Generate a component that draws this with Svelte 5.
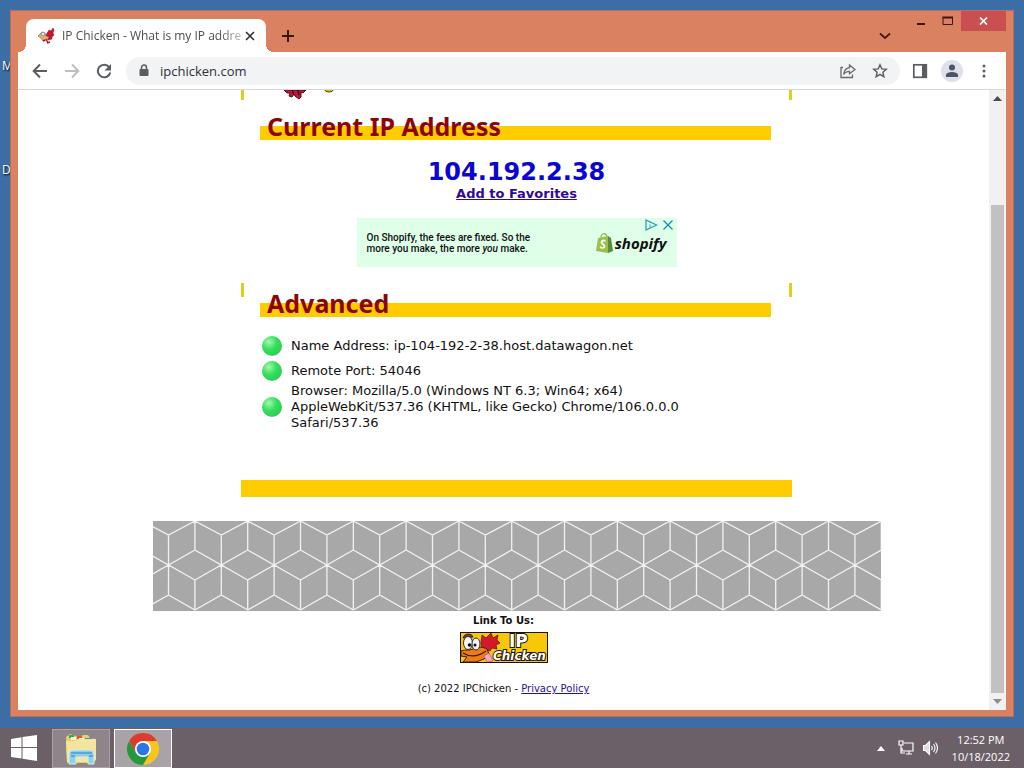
<script>
  const details = [
    'Name Address: ip-104-192-2-38.host.datawagon.net',
    'Remote Port: 54046',
    'Browser: Mozilla/5.0 (Windows NT 6.3; Win64; x64) AppleWebKit/537.36 (KHTML, like Gecko) Chrome/106.0.0.0 Safari/537.36'
  ];

  const step = 26.4;
  let lattice = '';
  for (let i = 0; i < 15; i++) {
    const a = 15.5 + i * step * 2;
    const l = a - step;
    const r = a + step;
    lattice += `M${a} 14V74M${r} 0V29M${r} 59V89`;
    lattice += `M${l} 0L${a} 14L${r} 0M${l} 29L${a} 44L${r} 29`;
    lattice += `M${l} 59L${a} 44L${r} 59M${l} 89L${a} 74L${r} 89`;
  }
</script>

<div class="screen">
  <div class="desktop">
    <span class="shortcut first">M</span>
    <span class="shortcut second">D</span>

    <section class="window">
      <header class="tabs">
        <div class="tab">
          <svg class="favicon" width="18" height="18" viewBox="0 0 18 18">
            <path d="M9 8l3-5 2 1 2-3 1 2-1 3 1 2-2 2v2l-4 1z" fill="#c8142e" stroke="#901020" stroke-width=".5" />
            <path d="M1 9l4-4 3 1 1 3 3 1-2 3-4 1-2-3z" fill="#e9ae6a" stroke="#7b5a3b" stroke-width=".6" />
            <circle cx="6" cy="7" r="1.800" fill="#eef2ea" stroke="#667" stroke-width=".6" />
            <path d="M9 12l2 4M10 16l3-1M8 13l-2 1" stroke="#b41530" stroke-width="1.500" />
          </svg>
          <span class="title">IP Chicken - What is my IP addre</span>
          <button class="close-tab" aria-label="Close tab">
            <svg width="10" height="10" viewBox="0 0 10 10"><path d="M1 1l8 8M9 1L1 9" stroke="#333" stroke-width="1.700" /></svg>
          </button>
        </div>
        <button class="new-tab" aria-label="New tab">
          <svg width="12" height="12" viewBox="0 0 12 12"><path d="M6 0v12M0 6h12" stroke="#341a12" stroke-width="2" /></svg>
        </button>
        <button class="search-tabs" aria-label="Search tabs">
          <svg width="12" height="8" viewBox="0 0 12 8"><path d="M1 1.500l5 4.500 5-4.500" fill="none" stroke="#4d180b" stroke-width="1.800" /></svg>
        </button>
        <div class="controls">
          <button aria-label="Minimize"><svg width="10" height="10" viewBox="0 0 10 10"><path d="M1 8h8" stroke="#401309" stroke-width="2" /></svg></button>
          <button aria-label="Maximize"><svg width="12" height="10" viewBox="0 0 12 10"><path d="M1 1.500h9.500v7H1z" fill="none" stroke="#401309" /><path d="M.5 1.500h10.500" stroke="#401309" stroke-width="2" /></svg></button>
          <button class="quit" aria-label="Close"><svg width="9" height="8" viewBox="0 0 9 8"><path d="M1 .5l7 7M8 .5l-7 7" stroke="#fff" stroke-width="1.700" /></svg></button>
        </div>
      </header>

      <nav class="toolbar">
        <button aria-label="Back"><svg width="16" height="16" viewBox="0 0 16 16"><path d="M15 8H2M8 1.500L1.700 8 8 14.500" fill="none" stroke="#5a5d61" stroke-width="2" /></svg></button>
        <button aria-label="Forward"><svg width="16" height="16" viewBox="0 0 16 16"><path d="M1 8h13M8 1.500L14.300 8 8 14.500" fill="none" stroke="#bcbec1" stroke-width="2" /></svg></button>
        <button aria-label="Reload"><svg width="16" height="16" viewBox="0 0 16 16"><path d="M13.200 4.200A6.300 6.300 0 1 0 14.300 9.500" fill="none" stroke="#5a5d61" stroke-width="2" /><path d="M15 1v6.500H8.500z" fill="#5a5d61" /></svg></button>
        <div class="address">
          <svg width="10" height="13" viewBox="0 0 10 13"><path d="M2.500 5.500V3.500a2.500 2.500 0 0 1 5 0v2" fill="none" stroke="#5a5d61" stroke-width="1.500" /><rect x=".5" y="5" width="9" height="7" rx="1" fill="#5a5d61" /></svg>
          <input aria-label="Address" value="ipchicken.com" />
          <button aria-label="Share"><svg width="16" height="16" viewBox="0 0 16 16" fill="none" stroke="#66696d" stroke-width="1.300"><path d="M3 4.500H1v10h11.500v-3" /><path d="M9.500 2L15 6.500l-5.500 4.200V8.300C6.800 8.300 5 9.200 3.700 11.500c.3-3.700 2.300-6.300 5.800-6.800z" /></svg></button>
          <button aria-label="Bookmark"><svg width="16" height="16" viewBox="0 0 16 16"><path d="M8 1.800l1.800 4.100 4.500.4-3.400 3 1 4.400L8 11.400l-3.900 2.300 1-4.400-3.400-3 4.500-.4z" fill="none" stroke="#5a5d61" stroke-width="1.400" /></svg></button>
        </div>
        <button aria-label="Side panel"><svg width="16" height="16" viewBox="0 0 16 16"><rect x="1.800" y="1.800" width="12.500" height="12.500" fill="none" stroke="#5a5d61" stroke-width="1.700" /><path d="M10 1h5v14h-5z" fill="#5a5d61" /></svg></button>
        <button class="profile" aria-label="Profile"><svg width="22" height="22" viewBox="0 0 22 22"><circle cx="11" cy="11" r="11" fill="#dde1ea" /><circle cx="11" cy="7.500" r="3" fill="#4b5468" /><path d="M5 17v-2c0-2 3.500-3 6-3s6 1 6 3v2z" fill="#4b5468" /></svg></button>
        <button aria-label="Menu"><svg width="16" height="16" viewBox="0 0 16 16" fill="#5a5d61"><circle cx="8" cy="3" r="1.500" /><circle cx="8" cy="8" r="1.500" /><circle cx="8" cy="13" r="1.500" /></svg></button>
      </nav>

      <div class="viewport">
        <div class="page">
          <main>
            <div class="frame">
              <div class="edges top">
                <svg width="56" height="10" viewBox="0 0 56 10">
                  <path d="M2 0h22l-3 3-2-1v5l-2 2-4-3-1-2-2 3-3-1 1-3-3 0z" fill="#c81538" stroke="#4c1118" />
                  <path d="M10 0l2 5M16 0l1 5" stroke="#3c1118" stroke-width="1.500" />
                  <ellipse cx="47" cy="0" rx="4" ry="2" fill="#d8bd18" stroke="#4c4518" />
                </svg>
              </div>
              <h1>Current IP Address</h1>
              <p class="ip">104.192.2.38</p>
              <a class="favorite" href="#favorites">Add to Favorites</a>
              <aside>
                <p>On Shopify, the fees are fixed. So the<br />more you make, the more <i>you</i> make.</p>
                <div class="brand">
                  <svg width="17" height="20" viewBox="0 0 17 20">
                    <path d="M5 5c0-5 5-6 6-1" fill="none" stroke="#8eb047" stroke-width="1.200" />
                    <path d="M2 5l10-2v17L0 18z" fill="#9ac24a" /><path d="M12 3l3 2 2 13-5 2z" fill="#5d8b3c" />
                    <path d="M9.500 8c-2-1-4-.5-4 1.300 0 2 3 2 3 4 0 1.700-2.300 2-4.500.7" fill="none" stroke="#fff" stroke-width="1.800" />
                  </svg>
                  <b>shopify</b>
                </div>
                <div class="choices">
                  <svg width="28" height="12" viewBox="0 0 28 12"><path d="M1 1l10.500 5L1 11z" fill="none" stroke="#27a3b8" stroke-width="1.300" /><path d="M5 5.500v3M5 3v1.200" stroke="#27a3b8" /><path d="M18.500 1.500l9 9M27.500 1.500l-9 9" stroke="#168eab" stroke-width="1.300" /></svg>
                </div>
              </aside>
              <div class="edges"></div>
              <h2>Advanced</h2>
              <ul>
                {#each details as line}
                  <li><i class="bullet"></i><span>{line}</span></li>
                {/each}
              </ul>
              <div class="rule"></div>
            </div>
            <svg class="cubes" viewBox="0 0 728 90" preserveAspectRatio="xMidYMid slice">
              <rect width="728" height="90" fill="#a8a8a8" />
              <path d={lattice} fill="none" stroke="#f2f2f2" stroke-width="1.300" />
            </svg>
          </main>
          <footer>
            <b>Link To Us:</b>
            <a class="badge" href="#link" aria-label="IP Chicken">
              <svg width="88" height="31" viewBox="0 0 88 31">
                <rect x=".5" y=".5" width="87" height="30" fill="#f8c808" stroke="#16140c" />
                <path d="M21 10l1-7 4 3 5-5 2 5 5-3-1 5 3 3-4 2 1 4-5-1-2 3-8-2z" fill="#d6182d" stroke="#541019" stroke-width=".7" />
                <path d="M1 19c5-2 8 0 12-2 6-3 10-2 14 0l2 5-5 5-8 3H3l4-5-6-1z" fill="#f07a18" stroke="#30200e" />
                <path d="M3 21c8 5 16 3 23-2" fill="none" stroke="#30200e" stroke-width="1.200" />
                <path d="M24 24l5-3 4 8-6 1z" fill="#f5a8c4" stroke="#9c4b6c" stroke-width=".6" />
                <path d="M3 6c1-5 9-5 10-1z" fill="#6f4930" stroke="#30200e" />
                <ellipse cx="8" cy="11" rx="4.500" ry="6.500" fill="#f4f5fa" stroke="#26262a" />
                <ellipse cx="16" cy="12" rx="4" ry="6" fill="#f4f5fa" stroke="#26262a" />
                <circle cx="9.500" cy="13" r="1.800" fill="#111" /><circle cx="15" cy="13" r="1.500" fill="#111" />
                <text x="49" y="15" class="ip-mark">IP</text>
                <text x="33" y="28" class="chicken-mark">Chicken</text>
              </svg>
            </a>
            <p>(c) 2022 IPChicken - <a href="#privacy">Privacy Policy</a></p>
          </footer>
        </div>
        <div class="scrollbar">
          <svg width="9" height="5" viewBox="0 0 9 5"><path d="M0 5l4.500-5L9 5z" fill="#4c4c4c" /></svg>
          <div class="thumb"></div>
          <svg width="9" height="5" viewBox="0 0 9 5"><path d="M0 0l4.500 5L9 0z" fill="#8c8c8c" /></svg>
        </div>
      </div>
    </section>
  </div>

  <div class="taskbar">
    <button class="start" aria-label="Start">
      <svg width="28" height="26" viewBox="0 0 28 26" fill="#fff"><path d="M1 4l10.500-1.800V12H1zM12.500 2L27 0v12H12.500zM1 13h10.500v10.500L1 22zM12.500 13H27v13l-14.500-2.200z" /></svg>
    </button>
    <button class="task" aria-label="File Explorer">
      <svg width="34" height="32" viewBox="0 0 34 32">
        <path d="M2 4l4-3 6 2 3 2 4-3h5l2 3 5 1v22l-2 2H3z" fill="#e5cd72" />
        <path d="M5 2h5v3H5z" fill="#35ad42" /><path d="M13 3h5v3h-5z" fill="#d85b3d" /><path d="M21 5h7v3h-7z" fill="#438cc9" />
        <path d="M7 4h5v3H7zM15 5h5v3h-5z" fill="#faf6df" />
        <path d="M2 8h9l3-2h18v21l-4 2H3z" fill="#f4e49c" />
        <path d="M5 31V20q1-3 5-3h16q4 0 4 3v11h-6v-7H12v7z" fill="#91cee8" stroke="#d1edf5" />
        <path d="M7 20h21M7 23h4m14 0h4" stroke="#4c9dc4" stroke-width="1.500" />
      </svg>
    </button>
    <button class="task active" aria-label="Google Chrome">
      <svg width="32" height="32" viewBox="0 0 32 32">
        <circle cx="16" cy="16" r="16" fill="#fbc41f" />
        <path d="M2.140 8A16 16 0 0 1 29.860 8H16L9 20z" fill="#dc3b31" />
        <path d="M2.140 8A16 16 0 0 0 16 32l7-12H9z" fill="#25973f" />
        <circle cx="16" cy="16" r="8" fill="#fff" /><circle cx="16" cy="16" r="6.300" fill="#2879e5" />
      </svg>
    </button>
    <div class="tray">
      <svg width="8" height="5" viewBox="0 0 8 5"><path d="M0 5l4-5 4 5z" fill="#fff" /></svg>
      <svg width="16" height="16" viewBox="0 0 16 16" fill="none" stroke="#fff" stroke-width="1.200"><path d="M6 3h9v8H4V8M8 14h6M11 11v3" /><path d="M1 1h4v4H1zM3 5v8h4" /></svg>
      <svg width="16" height="16" viewBox="0 0 16 16" fill="none" stroke="#fff" stroke-width="1.100"><path d="M1.500 5.500h2l4-4v13l-4-4h-2z" fill="#ddd" /><path d="M9.500 6q1.500 2 0 4M11.500 4q3 4 0 8M13.500 2.500q4 5.500 0 11" /></svg>
      <time>12:52 PM<br />10/18/2022</time>
    </div>
  </div>
</div>

<style>
  :global(body) { margin: 0; }
  * { box-sizing: border-box; }
  svg { display: block; flex-shrink: 0; }
  p, h1, h2, ul { margin: 0; padding: 0; }
  button { display: flex; align-items: center; justify-content: center; padding: 0; border: 0; background: none; }

  .screen { display: flex; flex-direction: column; height: 100vh; overflow: hidden; font-family: "Open Sans", sans-serif; }
  .desktop { position: relative; display: flex; flex: 1; min-height: 0; padding: 10px 10px 11px; background: #3a6ea5; }
  .shortcut { position: absolute; left: 2px; font-size: 12px; line-height: 16px; color: #fff; text-shadow: 1px 1px 2px #000; }
  .first { top: 58px; }
  .second { top: 162px; }

  .window { position: relative; display: flex; flex: 1; flex-direction: column; min-width: 0; padding: 0 7px 6px; border: 1px solid #bd6e55; background: #d98160; }
  .tabs { display: flex; align-items: flex-end; height: 41px; }
  .tab { position: relative; display: flex; align-items: center; width: 240px; height: 33px; margin-left: 8px; padding: 0 10px 0 11px; border-radius: 8px 8px 0 0; background: #fff; }
  .tab::before, .tab::after { position: absolute; bottom: 0; width: 8px; height: 8px; content: ""; }
  .tab::before { right: 100%; background: radial-gradient(circle at 0 0, transparent 8px, #fff 8px); }
  .tab::after { left: 100%; background: radial-gradient(circle at 100% 0, transparent 8px, #fff 8px); }
  .title { flex: 1; margin-left: 7px; font-size: 12px; line-height: 16px; color: #4a4d51; white-space: nowrap; mask-image: linear-gradient(90deg, #000 86%, #0004); }
  .close-tab { width: 12px; height: 16px; }
  .new-tab { width: 28px; height: 33px; margin-left: 8px; }
  .search-tabs { width: 28px; height: 33px; margin-left: auto; }
  .controls { display: flex; align-self: flex-start; margin-left: 8px; }
  .controls button { width: 27px; height: 20px; }
  .controls .quit { width: 45px; background: #c94f50; }

  .toolbar { display: flex; align-items: center; gap: 8px; height: 38px; padding: 0 10px; border-bottom: 1px solid #d5d7da; background: #fff; }
  .toolbar button { width: 24px; height: 28px; }
  .address { display: flex; flex: 1; align-items: center; gap: 8px; height: 28px; margin-left: 2px; padding: 0 8px 0 13px; border-radius: 14px; background: #f1f3f4; }
  .address input { flex: 1; min-width: 0; height: 24px; padding: 0 0 0 3px; border: 0; outline: 0; background: none; font: 13px "Open Sans", sans-serif; color: #303134; }

  .viewport { display: flex; flex: 1; min-height: 0; overflow: hidden; background: #fff; font-family: "DejaVu Sans", Verdana, sans-serif; color: #111; }
  .page { flex: 1; }
  .scrollbar { display: flex; flex-direction: column; align-items: center; gap: 6px; width: 17px; padding: 6px 0; background: #f1f1f1; }
  .thumb { flex: 1; width: 13px; margin-top: 98px; background: #c1c1c1; }

  main { display: flex; flex-direction: column; align-items: center; padding-left: 26px; }
  .frame { display: flex; flex-direction: column; align-items: center; width: 100%; max-width: 551px; }
  .edges { align-self: stretch; height: 14px; margin: 16px 0 6px; border: solid #e0cf1c; border-width: 0 3px; }
  .edges.top { height: 10px; margin: 0 0 26px; padding-left: 38px; }
  h1, h2 { width: 100%; max-width: 511px; height: 14px; margin-left: -2px; padding-left: 7px; background: #fc0; font: bold 25px/1 "Noto Sans", sans-serif; line-height: 0; color: #8e0406; }
  .ip { margin-top: 16px; font-size: 24px; font-weight: bold; line-height: 32px; color: #0b04d4; }
  .favorite { margin-top: -2px; font-size: 13px; font-weight: bold; line-height: 16px; color: #2f0a96; }

  aside { position: relative; display: flex; align-items: center; justify-content: space-between; width: 320px; height: 49px; margin-top: 16px; padding: 0 10px; background: #dfffe9; }
  aside p { font: 500 10px/11px Roboto, sans-serif; }
  .brand { display: flex; align-items: center; gap: 2px; }
  .brand b { font: italic bold 15px/20px "Noto Sans", sans-serif; }
  .choices { position: absolute; top: 1px; right: 4px; }

  ul { align-self: stretch; margin-top: 16px; padding-left: 21px; list-style: none; }
  li { display: flex; align-items: center; gap: 9px; min-height: 25px; max-width: 440px; font-size: 13px; line-height: 16px; }
  .bullet { flex-shrink: 0; width: 20px; height: 20px; border-radius: 50%; background: radial-gradient(circle at 35% 30%, #a6f7ae, #35df5e 40%, #2ed055 70%, #5fc478); }
  .rule { align-self: stretch; height: 17px; margin-top: 49px; background: #fc0; }
  .cubes { width: 100%; max-width: 728px; height: 90px; margin-top: 24px; }

  footer { display: flex; flex-direction: column; align-items: center; font-size: 10px; line-height: 13px; }
  footer b { margin-top: 3px; }
  .badge { margin-top: 5px; }
  footer p { margin-top: 19px; }
  footer p a { color: #25109c; }
  .ip-mark, .chicken-mark { fill: #fff; stroke: #17130a; stroke-width: 2px; paint-order: stroke; font-family: "DejaVu Sans", sans-serif; font-weight: bold; }
  .ip-mark { font-size: 17px; }
  .chicken-mark { font-size: 12px; font-style: italic; }

  .taskbar { display: flex; height: 40px; background: #6b5f68; }
  .start { width: 48px; }
  .task { width: 58px; margin: 1px 0 0 4px; border: 1px solid #aaa2a8; background: #8d858a; }
  .task.active { border-color: #fff; background: #a9a2a7; }
  .tray { display: flex; align-items: center; gap: 8px; margin-left: auto; padding-right: 14px; color: #fff; }
  .tray svg:first-child { margin-right: 5px; }
  time { margin-left: 6px; font-size: 11px; line-height: 17px; text-align: center; }
</style>
